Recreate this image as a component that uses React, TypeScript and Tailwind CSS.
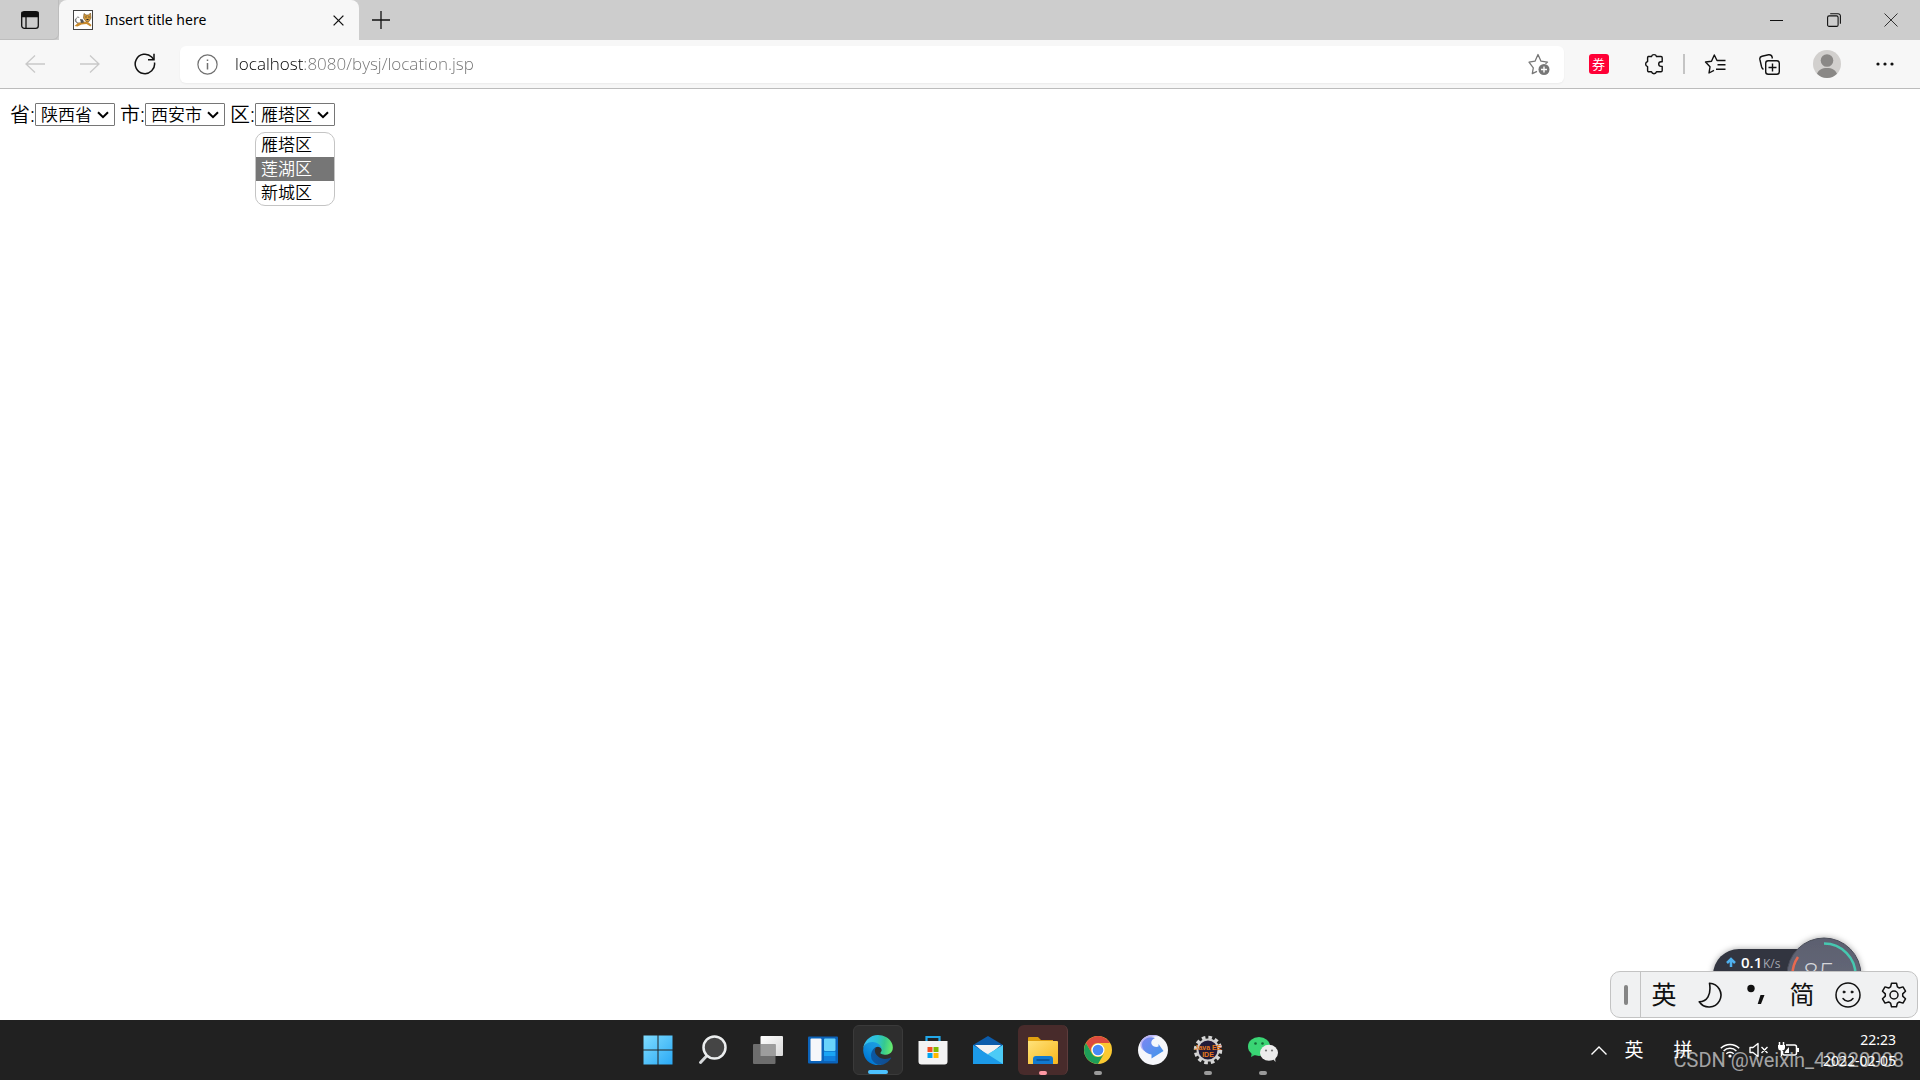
import { useState, type ReactNode } from "react";

const provinces = ["陕西省", "四川省", "河南省"];
const cities = ["西安市", "咸阳市", "宝鸡市"];
const districts = ["雁塔区", "莲湖区", "新城区"];

function Chevron() {
  return (
    <svg className="pointer-events-none absolute right-1.5 top-1.5 h-3 w-3" viewBox="0 0 12 12" fill="none" stroke="#000" strokeWidth="2">
      <path d="M1 3.2 6 8.2 11 3.2" />
    </svg>
  );
}

function Picker({ id, label, options, children }: { id: string; label: string; options: string[]; children?: ReactNode }) {
  const [value, setValue] = useState(options[0]);

  return (
    <div className="flex items-center">
      <label htmlFor={id} className="w-[25px] whitespace-nowrap text-xl leading-[23px]">{label}:</label>
      <div className="relative">
        <select
          id={id}
          value={value}
          onChange={(e) => setValue(e.target.value)}
          className="block h-[23px] w-20 appearance-none rounded-[1px] border border-[#767676] bg-white pl-[5px] text-[17px] leading-5"
        >
          {options.map((o) => (
            <option key={o}>{o}</option>
          ))}
        </select>
        <Chevron />
        {children}
      </div>
    </div>
  );
}

function TabStrip() {
  return (
    <header className="flex h-10 bg-[#cdcdcd]">
      <div className="flex w-[59px] rounded-br-md border-b border-r border-[#bdbdbd] bg-[#cdcdcd]">
        <button aria-label="Tab actions" className="flex flex-1 items-center justify-center pl-0.5">
          <svg width="18" height="18" viewBox="0 0 18 18" fill="none" stroke="#111" strokeWidth="1.3">
            <rect x="0.7" y="0.7" width="16.6" height="16.6" rx="2.6" />
            <path d="M1 1.5h16v4H1z" fill="#111" />
            <path d="M5 5v12" />
          </svg>
        </button>
      </div>
      <div className="flex w-[300px] items-center rounded-t-lg bg-[#f7f7f7] pl-3.5 pr-3">
        <svg width="20" height="20" viewBox="0 0 20 20">
          <rect x="0.5" y="0.5" width="19" height="19" fill="#fff" stroke="#444" />
          <path d="M6.500 13.500C3 13 2 10 3.500 8c1-1.500 2.500-1 2.500 0M2.500 9c-1 3 2 5 4 4" fill="none" stroke="#777" strokeWidth="1" />
          <path d="M1.500 16 5 13l5-1.500 5 .5 3.500 3-1 1.500-4-2.500-5 .5-4 2z" fill="#c98a2b" />
          <path d="M11 3.500 13 5h2.500l2-2 .5 5-2 3.500h-3L10.500 8z" fill="#d39a3c" stroke="#6b4a1c" strokeWidth=".6" />
          <path d="m7 9 3 .5 1 3-3 .5z" fill="#555" />
          <path d="M12.500 7h1M15.500 7h1M13.500 9.500h2" stroke="#222" strokeWidth="1" />
        </svg>
        <span className="ml-3 flex-1 text-sm">Insert title here</span>
        <button aria-label="Close tab" className="flex h-6 w-[18px] items-center justify-center">
          <svg width="11" height="11" viewBox="0 0 11 11" stroke="#111" strokeWidth="1.3"><path d="m.6.600 9.800 9.800M10.400.600.600 10.400" /></svg>
        </button>
      </div>
      <button aria-label="New tab" className="flex w-[43px] items-center justify-center">
        <svg width="18" height="18" viewBox="0 0 18 18" stroke="#111" strokeWidth="1.3"><path d="M9 0v18M0 9h18" /></svg>
      </button>
      <div className="ml-auto flex">
        <button aria-label="Minimize" className="flex w-[57px] items-center justify-center">
          <svg width="13" height="13" viewBox="0 0 13 13" stroke="#111"><path d="M0 6.500h13" /></svg>
        </button>
        <button aria-label="Restore" className="flex w-[57px] items-center justify-center">
          <svg width="14" height="14" viewBox="0 0 14 14" fill="none" stroke="#111" strokeWidth="1.100">
            <rect x="0.6" y="2.900" width="10.500" height="10.500" rx="1.500" />
            <path d="M3.200.700h7.800a2.400 2.400 0 0 1 2.400 2.400v7.700" />
          </svg>
        </button>
        <button aria-label="Close" className="flex w-[58px] items-center justify-center">
          <svg width="14" height="14" viewBox="0 0 14 14" stroke="#333" strokeWidth="1"><path d="m.5.500 13 13M13.500.500l-13 13" /></svg>
        </button>
      </div>
    </header>
  );
}

function ToolButton({ label, wide, children }: { label: string; wide?: boolean; children: ReactNode }) {
  return (
    <button aria-label={label} className={`flex h-full shrink-0 items-center justify-center ${wide ? "w-[60px]" : "w-[55px]"}`}>
      {children}
    </button>
  );
}

function Toolbar() {
  const [url, setUrl] = useState("localhost:8080/bysj/location.jsp");

  return (
    <nav className="flex h-[49px] items-center border-b border-[#bcbcbc] bg-[#f7f7f7] pl-[7px] pr-2">
      <ToolButton label="Back">
        <svg width="20" height="18" viewBox="0 0 20 18" fill="none" stroke="#c9c9c9" strokeWidth="1.300"><path d="M20 9H1M10 .500 1 9l9 8.500" /></svg>
      </ToolButton>
      <ToolButton label="Forward">
        <svg width="20" height="18" viewBox="0 0 20 18" fill="none" stroke="#c9c9c9" strokeWidth="1.300"><path d="M0 9h19M10 .500 19 9l-9 8.500" /></svg>
      </ToolButton>
      <ToolButton label="Refresh">
        <svg width="22" height="22" viewBox="0 0 22 22" fill="none" stroke="#111" strokeWidth="1.500">
          <path d="M20.500 9.500A9.700 9.700 0 1 1 17.700 4l2 2.500" />
          <path d="M20 .800v6h-6" />
        </svg>
      </ToolButton>

      <div className="ml-2 flex h-[37px] flex-1 items-center rounded-md bg-white pl-[17px] pr-3.5 shadow-xs">
        <button aria-label="Site information">
          <svg width="21" height="21" viewBox="0 0 21 21" fill="none" stroke="#707070" strokeWidth="1.200">
            <circle cx="10.500" cy="10.500" r="9.600" />
            <path d="M10.500 9v6.500M10.500 5.500v1.600" strokeWidth="1.500" />
          </svg>
        </button>
        <input
          aria-label="Address"
          value={url}
          onChange={(e) => setUrl(e.target.value)}
          className="ml-[17px] min-w-0 flex-1 bg-[linear-gradient(90deg,#000_69px,#707070_69px)] bg-clip-text font-['Open_Sans',sans-serif] text-[17px] leading-6 font-[350] text-transparent outline-none"
        />
        <button aria-label="Add to favorites">
          <svg width="22" height="22" viewBox="0 0 22 22" fill="none" stroke="#777" strokeWidth="1.300">
            <path d="m9 18.300-4.700 2.300 1-5.800L1 9.200l6-1L10 1.500l3 6.700 6.500.900-2 1.600" strokeLinejoin="round" />
            <circle cx="16" cy="16.500" r="5.500" fill="#777" stroke="none" />
            <path d="M16 13.500v6M13 16.500h6" stroke="#fff" strokeWidth="1.400" />
          </svg>
        </button>
      </div>

      <div className="ml-[7px] flex h-full items-center">
        <ToolButton label="Coupons">
          <span className="flex h-5 w-5 items-center justify-center rounded-[3px] bg-[#ff0036] text-[13px] leading-none text-white">券</span>
        </ToolButton>
        <ToolButton label="Extensions">
          <svg width="20" height="22" viewBox="0 0 20 22" fill="none" stroke="#111" strokeWidth="1.400" strokeLinejoin="round">
            <path d="M4 3.500h3.500a2.600 2.600 0 0 1 5 0H17a1.200 1.200 0 0 1 1.200 1.200v4.100h-1.200a2.300 2.300 0 0 0 0 4.600h1.200v4.200a1.200 1.200 0 0 1-1.200 1.200h-4.500a2.600 2.600 0 0 1-5 0H4.800a1.200 1.200 0 0 1-1.200-1.200v-3.900a2.700 2.700 0 0 1 0-5.200V4.700z" />
          </svg>
        </ToolButton>
        <div className="mx-0.5 h-5 w-0.5 bg-[#c4c4c4]" />
        <ToolButton label="Favorites">
          <svg width="22" height="20" viewBox="0 0 22 20" fill="none" stroke="#111" strokeWidth="1.400" strokeLinejoin="round">
            <path d="M10 16.300 5 19l1-6.200L1.500 8l6-.8L10.300 1l2.700 5.500h8.500M13.500 10.700h8M12 15.300h9.500" />
          </svg>
        </ToolButton>
        <ToolButton label="Collections">
          <svg width="21" height="21" viewBox="0 0 21 21" fill="none" stroke="#111" strokeWidth="1.400">
            <rect x="6.700" y="6.700" width="13.600" height="13.600" rx="2.500" />
            <path d="M13.500 9.500v8M9.500 13.500h8M4.500 15.300C3 14.500 3 14 2.500 12.500L.900 5.500C.500 3.500 1.200 2.600 3 2.200l6.500-1.400c2-.3 3.200.4 3.600 2.200l.3 1.500" />
          </svg>
        </ToolButton>
        <ToolButton label="Profile" wide>
          <svg width="28" height="28" viewBox="0 0 28 28">
            <circle cx="14" cy="14" r="14" fill="#d2d0ce" />
            <circle cx="14" cy="10.500" r="6.300" fill="#8a8886" />
            <path d="M4 23.800C5.500 20 9 18 14 18s8.500 2 10 5.800A14 14 0 0 1 14 28 14 14 0 0 1 4 23.800z" fill="#8a8886" />
          </svg>
        </ToolButton>
        <ToolButton label="Settings and more">
          <svg width="18" height="4" viewBox="0 0 18 4" fill="#111">
            <circle cx="2" cy="2" r="1.600" /><circle cx="9" cy="2" r="1.600" /><circle cx="16" cy="2" r="1.600" />
          </svg>
        </ToolButton>
      </div>
    </nav>
  );
}

// network speed bubble, sits behind the input bar
function SpeedWidget() {
  return (
    <svg className="absolute bottom-11 right-12 h-[46px] w-44" viewBox="0 0 176 46">
      <defs>
        <filter id="speedShadow" x="-20%" y="-20%" width="140%" height="140%">
          <feDropShadow dx="0" dy="0" stdDeviation="3" floodColor="#000" floodOpacity="0.35" />
        </filter>
        <linearGradient id="speedFill" x1="0" x2="0" y1="0" y2="1">
          <stop offset="0" stopColor="#5c6070" />
          <stop offset="1" stopColor="#6a6d7c" />
        </linearGradient>
      </defs>
      <g filter="url(#speedShadow)">
        <rect x="17" y="19" width="110" height="56" rx="26" fill="#31353f" />
        <circle cx="128" cy="45" r="37" fill="url(#speedFill)" stroke="#4a4d59" />
      </g>
      <path d="M128 13.500A31.500 31.500 0 0 1 159.500 46" fill="none" stroke="#46c8b0" strokeWidth="2.500" />
      <path d="M96.500 46a31.500 31.500 0 0 1 5.500-19" fill="none" stroke="#e8694f" strokeWidth="2.500" />
      <path d="M35 37v-6M31 33l4-4 4 4" fill="none" stroke="#4fb0ee" strokeWidth="2.500" />
      <text x="45" y="38" fill="#fff" fontSize="15" fontWeight="600" fontFamily="Open Sans, sans-serif">0.1</text>
      <text x="67" y="38" fill="#a4a7b0" fontSize="12" fontFamily="Open Sans, sans-serif">K/s</text>
      <text x="107" y="53" fill="#d5d6db" fontSize="28" fontWeight="300" fontFamily="Open Sans, sans-serif">85</text>
    </svg>
  );
}

function InputBar() {
  return (
    <div className="absolute bottom-0.5 right-0.5 flex h-[47px] rounded-[10px] border border-[#c3c3c3] bg-[#f0f1f2] text-[25px] leading-none text-[#111]">
      <div className="flex w-[30px] items-center justify-center border-r border-[#c3c3c3]">
        <div className="h-5 w-1 rounded-sm bg-[#858585]" />
      </div>
      <button className="w-[46px]">英</button>
      <button aria-label="Half width" className="flex w-[46px] items-center justify-center">
        <svg width="24" height="26" viewBox="0 0 24 26" fill="none" stroke="#111" strokeWidth="1.600" strokeLinejoin="round">
          <path d="M11.500 1.200A11.900 11.900 0 1 1 1.200 19.800C9 19.500 13.500 13 11.500 1.200z" />
        </svg>
      </button>
      <button aria-label="Punctuation" className="flex w-[46px] items-center justify-center">
        <svg width="20" height="22" viewBox="0 0 20 22" fill="#111">
          <circle cx="5" cy="4.500" r="3.700" />
          <path d="M14.500 11h4L15 20h-3.300z" />
        </svg>
      </button>
      <button className="w-[46px]">简</button>
      <button aria-label="Emoji" className="flex w-[46px] items-center justify-center">
        <svg width="26" height="26" viewBox="0 0 26 26" fill="none" stroke="#111" strokeWidth="1.500" strokeLinecap="round">
          <circle cx="13" cy="13" r="12" />
          <path d="M8 16.500c2.500 3.500 7.500 3.500 10 0" />
          <circle cx="9" cy="10" r="1" fill="#111" strokeWidth="1" /><circle cx="17" cy="10" r="1" fill="#111" strokeWidth="1" />
        </svg>
      </button>
      <button aria-label="Input settings" className="flex w-[46px] items-center justify-center">
        <svg width="26" height="26" viewBox="0 0 26 26" fill="none" stroke="#111" strokeWidth="1.500" strokeLinejoin="round">
          <path d="M10.500 1.200h5l.9 3.700 1.900 1.100 3.700-1.100 2.500 4.300-2.800 2.700v2.200l2.800 2.700-2.500 4.300-3.700-1.100-1.900 1.100-.9 3.700h-5l-.9-3.700-1.900-1.100L4 21.100l-2.500-4.300 2.800-2.700v-2.200L1.500 9.200 4 4.900 7.700 6l1.900-1.100z" />
          <circle cx="13" cy="13" r="4" />
        </svg>
      </button>
    </div>
  );
}

const apps = [
  {
    name: "Start",
    icon: (
      <svg width="30" height="30" viewBox="0 0 30 30">
        <defs><linearGradient id="win" x1="0" y1="0" x2="1" y2="1" gradientUnits="objectBoundingBox"><stop offset="0" stopColor="#7fdcff" /><stop offset="1" stopColor="#2aa9f5" /></linearGradient></defs>
        <path d="M.500.500h14v14H.500zM15.500.500h14v14h-14zM.500 15.500h14v14H.500zM15.500 15.500h14v14h-14z" fill="url(#win)" />
      </svg>
    ),
  },
  {
    name: "Search",
    icon: (
      <svg width="30" height="30" viewBox="0 0 30 30" fill="none">
        <path d="m10 19.500-7.500 8" stroke="#d5d8da" strokeWidth="3" strokeLinecap="round" />
        <circle cx="16.500" cy="12.500" r="11" fill="#454545" stroke="#eceeef" strokeWidth="2.500" />
      </svg>
    ),
  },
  {
    name: "Task view",
    icon: (
      <svg width="30" height="30" viewBox="0 0 30 30">
        <defs><linearGradient id="tv" x1="0" y1="0" x2="1" y2="1"><stop offset="0" stopColor="#fff" /><stop offset="1" stopColor="#d8d8d8" /></linearGradient></defs>
        <rect x="7.500" y="1" width="22.500" height="20" rx="1" fill="url(#tv)" />
        <rect x="0" y="9" width="22.500" height="20" rx="1" fill="#6d6d6d" />
        <path d="M7.500 9h15v12h-15z" fill="#9d9d9d" />
      </svg>
    ),
  },
  {
    name: "Widgets",
    icon: (
      <svg width="30" height="30" viewBox="0 0 30 30">
        <rect y="1.500" width="30" height="27" rx="1" fill="#0b63ba" />
        <rect x="2.500" y="3.500" width="11" height="22.500" rx="1" fill="#f5f7fa" />
        <rect x="16" y="3.500" width="11.500" height="12.500" rx="1" fill="#69d3fb" />
        <path d="M16 16.500h11.500V21H16z" fill="#1aa5f5" />
        <path d="M16 21h11.500v5H16z" fill="#1180dd" />
      </svg>
    ),
  },
  {
    name: "Microsoft Edge",
    active: true,
    icon: (
      <svg width="30" height="30" viewBox="0 0 256 259">
        <defs>
          <linearGradient id="e1" x1="63" y1="177" x2="241" y2="177" gradientUnits="userSpaceOnUse"><stop offset="0" stopColor="#0c59a4" /><stop offset="1" stopColor="#114a8b" /></linearGradient>
          <linearGradient id="e2" x1="157" y1="90" x2="46" y2="221" gradientUnits="userSpaceOnUse"><stop offset="0" stopColor="#1b9de2" /><stop offset=".4" stopColor="#1595df" /><stop offset="1" stopColor="#0078d4" /></linearGradient>
          <linearGradient id="e3" x1="20" y1="60" x2="250" y2="100" gradientUnits="userSpaceOnUse"><stop offset="0" stopColor="#35c1f1" /><stop offset=".4" stopColor="#2cc3d5" /><stop offset=".7" stopColor="#36c98f" /><stop offset="1" stopColor="#66eb6e" /></linearGradient>
        </defs>
        <path d="M235.680 195.460a93.730 93.730 0 0 1-10.540 4.710 101.870 101.870 0 0 1-35.900 6.460c-47.320 0-88.540-32.550-88.540-74.320A31.480 31.480 0 0 1 117.130 105c-42.800 1.800-53.800 46.400-53.800 72.530 0 73.880 68.090 81.370 82.760 81.370 7.910 0 19.840-2.300 27-4.560l1.310-.44a128.340 128.340 0 0 0 66.600-52.800 4 4 0 0 0-5.320-5.640z" fill="url(#e1)" />
        <path d="M105.730 246a79.200 79.200 0 0 1-22.740-21.340 80.720 80.720 0 0 1 29.530-120c3.120-1.470 8.450-4.130 15.540-4a32.350 32.350 0 0 1 25.690 13 31.880 31.880 0 0 1 6.360 18.660c0-.21 24.460-79.600-80-79.600-43.900 0-80 41.660-80 78.210a130.150 130.150 0 0 0 12.110 56 128 128 0 0 0 156.380 67.110 75.550 75.550 0 0 1-62.780-8z" fill="url(#e2)" />
        <path d="M152.330 148.860c-.81 1.050-3.300 2.500-3.300 5.660 0 2.610 1.700 5.120 4.720 7.230 14.380 10 41.490 8.680 41.560 8.680a59.560 59.560 0 0 0 30.270-8.350 61.380 61.380 0 0 0 30.430-52.880c.26-22.410-8-37.310-11.340-43.910C223.450 23.840 177.720 0 128 0A128 128 0 0 0 0 126.200c.48-36.540 36.800-66.050 80-66.050 3.500 0 23.460.34 42 10.070 16.340 8.580 24.900 18.940 30.850 29.210 6.180 10.670 7.280 24.150 7.280 29.520s-2.740 13.330-7.800 19.910z" fill="url(#e3)" />
      </svg>
    ),
  },
  {
    name: "Microsoft Store",
    icon: (
      <svg width="30" height="30" viewBox="0 0 30 30">
        <path d="M8.500 8V2h13v6" fill="none" stroke="#22a7e8" strokeWidth="2.200" />
        <path d="M.500 6h29v20.500a3 3 0 0 1-3 3h-23a3 3 0 0 1-3-3z" fill="#f3f3f3" />
        <path d="M9.500 12h5v5h-5z" fill="#f25022" /><path d="M15.500 12h5v5h-5z" fill="#7fba00" />
        <path d="M9.500 18h5v5h-5z" fill="#00a4ef" /><path d="M15.500 18h5v5h-5z" fill="#ffb900" />
      </svg>
    ),
  },
  {
    name: "Mail",
    icon: (
      <svg width="30" height="30" viewBox="0 0 30 30">
        <path d="M0 10 15 1l15 9v5H0z" fill="#0b5cab" />
        <path d="M2 10h26l-13 11z" fill="#f2f2f2" />
        <path d="M0 10v19h30V10L15 19.500z" fill="#1c9ae8" />
        <path d="M30 10v19L13 18.300l2 .7z" fill="#4ccbf6" />
      </svg>
    ),
  },
  {
    name: "File Explorer",
    alert: true,
    icon: (
      <svg width="30" height="30" viewBox="0 0 30 30">
        <defs><linearGradient id="fd" x1="0" y1="0" x2="1" y2="1"><stop offset="0" stopColor="#ffe27a" /><stop offset="1" stopColor="#f8b71c" /></linearGradient></defs>
        <path d="M0 3a1 1 0 0 1 1-1h9l3 3h12v5H0z" fill="#e0a010" />
        <path d="M0 6h29a1 1 0 0 1 1 1v21a1 1 0 0 1-1 1H0z" fill="url(#fd)" />
        <path d="M5 29v-5a3 3 0 0 1 3-3h14a3 3 0 0 1 3 3v5z" fill="#1279cf" />
        <path d="M8.500 25h13" stroke="#0a4d8c" strokeWidth="1.500" />
      </svg>
    ),
  },
  {
    name: "Google Chrome",
    running: true,
    icon: (
      <svg width="28" height="28" viewBox="0 0 28 28">
        <circle cx="14" cy="14" r="14" fill="#fbc931" />
        <path d="M1.900 7A14 14 0 0 1 26.100 7H14a7 7 0 0 0-6.100 10.500z" fill="#dd4b3e" />
        <path d="M1.900 7A14 14 0 0 0 14 28l6.100-10.500A7 7 0 0 1 7.900 17.500z" fill="#1e9e58" />
        <circle cx="14" cy="14" r="6.500" fill="#fff" />
        <circle cx="14" cy="14" r="5.300" fill="#4a8af4" />
      </svg>
    ),
  },
  {
    name: "Thunder",
    icon: (
      <svg width="30" height="30" viewBox="0 0 30 30">
        <defs><linearGradient id="th" x1="0" y1="0" x2="1" y2="1"><stop offset="0" stopColor="#7c86f2" /><stop offset="1" stopColor="#3f97ea" /></linearGradient></defs>
        <circle cx="15" cy="15" r="15" fill="#f6f7fb" />
        <path d="M3 6C7 0 15-1.500 21 1.200 15 .8 9 2.500 6.500 8 5 11 5.500 14 6.500 16 2.500 14 1.500 10 3 6z" fill="#b9b4f5" />
        <path d="M4.500 7C8 1.500 14 1.500 17 3c-5 2-4.500 7-1 8.500 1.500.6 3 .6 4.500 0V9l5 7-12 7.500v-4C7 18.500 2.500 13 4.500 7z" fill="url(#th)" />
      </svg>
    ),
  },
  {
    name: "Eclipse",
    running: true,
    icon: (
      <svg width="30" height="30" viewBox="0 0 30 30">
        <circle cx="15" cy="15" r="12.500" fill="none" stroke="#d6d6d6" strokeWidth="3.500" strokeDasharray="3.600 2.945" />
        <circle cx="15" cy="15" r="10.500" fill="#221b38" stroke="#cfcfcf" strokeWidth="2" />
        <text x="15" y="14.500" textAnchor="middle" fill="#e8791c" fontSize="7" fontWeight="700" fontFamily="Liberation Sans, sans-serif">Java EE</text>
        <text x="15" y="21.500" textAnchor="middle" fill="#e8791c" fontSize="7" fontWeight="700" fontFamily="Liberation Sans, sans-serif">IDE</text>
      </svg>
    ),
  },
  {
    name: "WeChat",
    running: true,
    icon: (
      <svg width="30" height="30" viewBox="0 0 30 30">
        <path d="M4 16.500 3 22l5-2.500z" fill="#2bc765" />
        <ellipse cx="11" cy="11.500" rx="11" ry="9.500" fill="#3ad574" />
        <path d="m24 23 3.500 4-.5-5.500z" fill="#dcdcdc" />
        <ellipse cx="21" cy="17.800" rx="9" ry="8" fill="#ececec" />
        <circle cx="7.500" cy="8.500" r="1.300" fill="#146b37" /><circle cx="14.500" cy="8.500" r="1.300" fill="#146b37" />
        <circle cx="18" cy="15.500" r="1.100" fill="#777" /><circle cx="24" cy="15.500" r="1.100" fill="#777" />
      </svg>
    ),
  },
];

function Taskbar() {
  return (
    <footer className="relative grid h-[60px] grid-cols-[1fr_auto_1fr] items-center bg-[#212121] pl-px text-white">
      <div />
      <div className="flex gap-[5px]">
        {apps.map((app) => (
          <button
            key={app.name}
            aria-label={app.name}
            className={`relative flex h-[50px] w-[50px] items-center justify-center rounded-md ${
              app.active ? "border border-[#3a3a3a] bg-[#2e2e2e]" : app.alert ? "border-r border-[#5d3c3c] bg-[#482b2b]" : ""
            }`}
          >
            {app.icon}
            {app.active && <span className="absolute bottom-0 h-1 w-5 rounded-full bg-[#4cc2ff]" />}
            {app.alert && <span className="absolute bottom-0 h-1 w-2 rounded-full bg-[#ff99a4]" />}
            {app.running && <span className="absolute bottom-0 h-1 w-2 rounded-full bg-[#9a9a9a]" />}
          </button>
        ))}
      </div>
      <div className="flex items-center justify-end pr-6">
        <button aria-label="Show hidden icons" className="mr-[17px]">
          <svg width="16" height="9" viewBox="0 0 16 9" fill="none" stroke="#fff" strokeWidth="1.400"><path d="m.500 8.500 7.500-7.500 7.500 7.500" /></svg>
        </button>
        <button className="mr-[29px] w-5 text-[19px] leading-none">英</button>
        <button className="mr-[27px] w-5 text-[19px] leading-none">拼</button>
        <button aria-label="Network, volume and battery" className="mr-6 flex items-center gap-[9px]">
          <svg width="20" height="16" viewBox="0 0 20 16" fill="none" stroke="#fff" strokeWidth="1.500">
            <path d="M.800 6.300a13 13 0 0 1 18.400 0M3.600 9a9 9 0 0 1 12.800 0M6.300 11.700a5.200 5.200 0 0 1 7.400 0" />
            <circle cx="10" cy="14" r="1.600" fill="#fff" stroke="none" />
          </svg>
          <svg width="20" height="16" viewBox="0 0 20 16" fill="none" stroke="#fff" strokeWidth="1.400" strokeLinejoin="round">
            <path d="M1 5.500h3L9 1.500v13l-5-4H1zM12.500 5l6 6M18.500 5l-6 6" />
          </svg>
          <svg width="21" height="16" viewBox="0 0 21 16" fill="none" stroke="#fff" strokeWidth="1.500">
            <path d="M8 3h8.500a2 2 0 0 1 2 2v6a2 2 0 0 1-2 2h-10a2 2 0 0 1-2-2V9" />
            <path d="M1.500 0v3M5.500 0v3M3.500 6v8" />
            <path d="M0 3h7v2.500a3 3 0 0 1-3 3H3a3 3 0 0 1-3-3zM7.500 9 11 5v6H6.500zM19 6h2v4h-2z" fill="#fff" stroke="none" />
          </svg>
        </button>
        <button className="text-right text-sm leading-[21px]">
          <span className="block">22:23</span>
          <span className="block">2022-02-05</span>
        </button>
      </div>
      <div className="pointer-events-none absolute bottom-1.5 right-4 font-['Roboto',sans-serif] text-xl leading-7 text-white/60">CSDN @weixin_43820008</div>
    </footer>
  );
}

export default function App() {
  const [hovered, setHovered] = useState(1);

  return (
    <div className="flex min-h-screen flex-col bg-white font-['Noto_Sans','Noto_Sans_CJK_SC',sans-serif] text-black">
      <TabStrip />
      <Toolbar />

      <main className="relative flex-1 overflow-hidden">
        <form className="flex gap-[5px] px-2.5 pt-3.5 font-[350]">
          <Picker id="province" label="省" options={provinces} />
          <Picker id="city" label="市" options={cities} />
          <Picker id="district" label="区" options={districts}>
            <ul role="listbox" aria-label="区" className="absolute left-0 top-[29px] w-20 overflow-hidden rounded-[10px] border border-[#c4c4c4] bg-white text-[17px] leading-6">
              {districts.map((d, i) => (
                <li
                  key={d}
                  role="option"
                  aria-selected={i === hovered}
                  onMouseEnter={() => setHovered(i)}
                  className={`pl-[5px] ${i === hovered ? "bg-[#767676] text-white" : ""}`}
                >
                  {d}
                </li>
              ))}
            </ul>
          </Picker>
        </form>
        <SpeedWidget />
        <InputBar />
      </main>

      <Taskbar />
    </div>
  );
}
